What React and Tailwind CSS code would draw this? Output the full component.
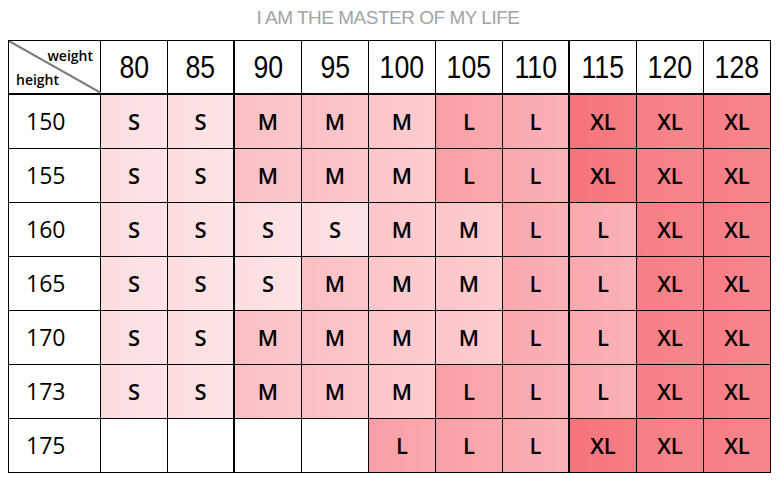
const weights = [80, 85, 90, 95, 100, 105, 110, 115, 120, 128];

const rows = [
  { h: 150, s: ['S', 'S', 'M', 'M', 'M', 'L', 'L', 'XL', 'XL', 'XL'] },
  { h: 155, s: ['S', 'S', 'M', 'M', 'M', 'L', 'L', 'XL', 'XL', 'XL'] },
  { h: 160, s: ['S', 'S', 'S', 'S', 'M', 'M', 'L', 'L', 'XL', 'XL'] },
  { h: 165, s: ['S', 'S', 'S', 'M', 'M', 'M', 'L', 'L', 'XL', 'XL'] },
  { h: 170, s: ['S', 'S', 'M', 'M', 'M', 'M', 'L', 'L', 'XL', 'XL'] },
  { h: 173, s: ['S', 'S', 'M', 'M', 'M', 'L', 'L', 'L', 'XL', 'XL'] },
  { h: 175, s: ['', '', '', '', 'L', 'L', 'L', 'XL', 'XL', 'XL'] },
];

// fill per size, a few columns run a touch lighter or darker
function cellBg(size, col) {
  if (size === 'S') return 'bg-linear-to-r from-[#fcdde0] to-[#fde4e6]';
  if (size === 'M') return col >= 4 ? 'bg-linear-to-r from-[#fcc6ca] to-[#fdcdd0]' : 'bg-linear-to-r from-[#fbbfc4] to-[#fcc7cb]';
  if (size === 'L') return col >= 6 ? 'bg-linear-to-r from-[#faa8ae] to-[#fbb2b7]' : 'bg-linear-to-r from-[#f89fa6] to-[#faa9ae]';
  if (size === 'XL') return col === 7 ? 'bg-linear-to-r from-[#f5737b] to-[#f77d84]' : 'bg-linear-to-r from-[#f77e86] to-[#f8868d]';
  return 'bg-white';
}

// thicker rules after the 85 and 110 columns
function rightRule(col) {
  return col === 1 || col === 6 ? 'border-r-2' : 'border-r';
}

export default function App() {
  return (
    <div className="w-[776px] h-[493px] bg-white overflow-hidden">
      <div className="h-[40px] flex items-start justify-center pt-[7px]">
        <p className="font-['Liberation_Sans',sans-serif] text-[19px] leading-[22px] text-[#a3a3a3] tracking-[-0.5px]">
          I AM THE MASTER OF MY LIFE
        </p>
      </div>

      <div className="ml-[8px] w-[763px] border-l border-t border-black grid grid-cols-[92px_repeat(10,67px)] auto-rows-[54px] text-black">
        <div className="relative border-r border-b-2 border-black flex flex-col justify-between px-[7px] pt-[6px] pb-[5px] font-['Open_Sans',sans-serif] text-[14px] leading-[17px] font-semibold">
          <svg className="absolute inset-0" width="92" height="52" viewBox="0 0 92 52">
            <line x1="0" y1="0" x2="92" y2="52" stroke="#7a7a7a" strokeWidth="2" />
          </svg>
          <span className="self-end">weight</span>
          <span className="self-start">height</span>
        </div>
        {weights.map((w, i) => (
          <div
            key={w}
            className={`${rightRule(i)} border-b-2 border-black flex items-center justify-center pt-[3px] font-['Liberation_Sans',sans-serif] text-[31px]`}
          >
            <span className="inline-block scale-x-[0.86]">{w}</span>
          </div>
        ))}

        {rows.map((r) => (
          <div key={r.h} className="contents">
            <div className="border-r border-b border-black flex items-center pl-[17px] font-['Open_Sans',sans-serif] text-[23px]">
              {r.h}
            </div>
            {r.s.map((sz, i) => (
              <div
                key={i}
                className={`${rightRule(i)} border-b border-black ${cellBg(sz, i)} flex items-center justify-center font-['Open_Sans',sans-serif] text-[22px] font-semibold`}
              >
                {sz}
              </div>
            ))}
          </div>
        ))}
      </div>
    </div>
  );
}
